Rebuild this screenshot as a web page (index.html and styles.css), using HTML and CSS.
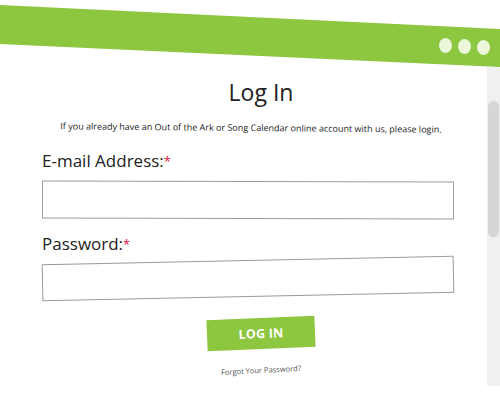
FILE: index.html
```html
<!DOCTYPE html>
<html>
<head>
<meta charset="utf-8">
<link rel="stylesheet" href="styles.css">
</head>
<body>
<div class="page">
  <header class="banner">
    <span class="dot"></span>
    <span class="dot"></span>
    <span class="dot"></span>
  </header>
  <div class="row">
    <main class="content">
      <h1 class="title">Log In</h1>
      <p class="intro">If you already have an Out of the Ark or Song Calendar online account with us, please login.</p>
      <label class="label" for="email">E-mail Address:<span class="req">*</span></label>
      <input class="field field-email" id="email" type="text">
      <label class="label label-pw" for="pw">Password:<span class="req">*</span></label>
      <input class="field field-pw" id="pw" type="password">
      <div class="actions">
        <button class="btn" type="button">LOG IN</button>
        <a class="forgot" href="#">Forgot Your Password?</a>
      </div>
    </main>
    <div class="scrollbar"><div class="thumb"></div></div>
  </div>
</div>
</body>
</html>
```

FILE: styles.css
```css
html, body {
  margin: 0;
  padding: 0;
  background: #ffffff;
}
body {
  width: 500px;
  height: 415px;
  overflow: hidden;
  font-family: "Open Sans", "Liberation Sans", sans-serif;
  color: #222222;
}
.page {
  display: flex;
  flex-direction: column;
}
.banner {
  height: 67px;
  box-sizing: border-box;
  background: #8dc63f;
  clip-path: polygon(0 5px, 100% 29px, 100% 67px, 0 44px);
  display: flex;
  justify-content: flex-end;
  align-items: flex-start;
  gap: 6px;
  padding: 38px 10px 0 0;
}
.dot {
  width: 13px;
  height: 15px;
  border-radius: 50%;
  background: #eaf7d9;
}
.dot:nth-child(2) { margin-top: 1px; }
.dot:nth-child(3) { margin-top: 2px; }
.row {
  display: flex;
  height: 348px;
}
.content {
  flex: 1;
  display: flex;
  flex-direction: column;
  padding: 0 33px 0 42px;
}
.title {
  margin: 11px 0 0 26px;
  font-size: 23px;
  line-height: 28px;
  font-weight: 400;
  text-align: center;
  color: #222;
}
.intro {
  margin: 15px -20px 0 -14px;
  font-size: 9px;
  line-height: 14px;
  white-space: nowrap;
  text-align: center;
  color: #222;
  transform: rotate(0.5deg);
}
.label {
  margin-top: 16px;
  font-size: 17px;
  line-height: 20px;
  color: #222;
}
.label-pw {
  margin-top: 15px;
}
.req {
  color: #e0103e;
  font-size: 13px;
  vertical-align: top;
}
.field {
  box-sizing: border-box;
  width: 412px;
  margin: 10px 0 0;
  padding: 0;
  border: 1px solid #9a9a9a;
  background: #fff;
  outline: none;
}
.field-email {
  height: 38px;
  transform: rotate(0.15deg);
}
.field-pw {
  height: 37px;
  margin-top: 6px;
  transform: rotate(-1.2deg);
}
.actions {
  display: flex;
  flex-direction: column;
  align-items: center;
  margin-left: 26px;
}
.btn {
  margin-top: 21px;
  width: 108px;
  height: 31px;
  border: 0;
  background: #8dc63f;
  color: #ffffff;
  font-family: "Open Sans", "Liberation Sans", sans-serif;
  font-weight: 700;
  font-size: 12.5px;
  letter-spacing: 0.2px;
  transform: rotate(-2.3deg);
}
.forgot {
  margin-top: 16px;
  font-size: 7.5px;
  color: #555555;
  text-decoration: none;
  transform: rotate(-3deg);
}
.scrollbar {
  width: 13px;
  height: 319px;
  box-sizing: border-box;
  padding: 34px 1px 0 1px;
  background: #f0f0f0;
}
.thumb {
  height: 136px;
  border-radius: 6px;
  background: #d6d6d6;
}
```
